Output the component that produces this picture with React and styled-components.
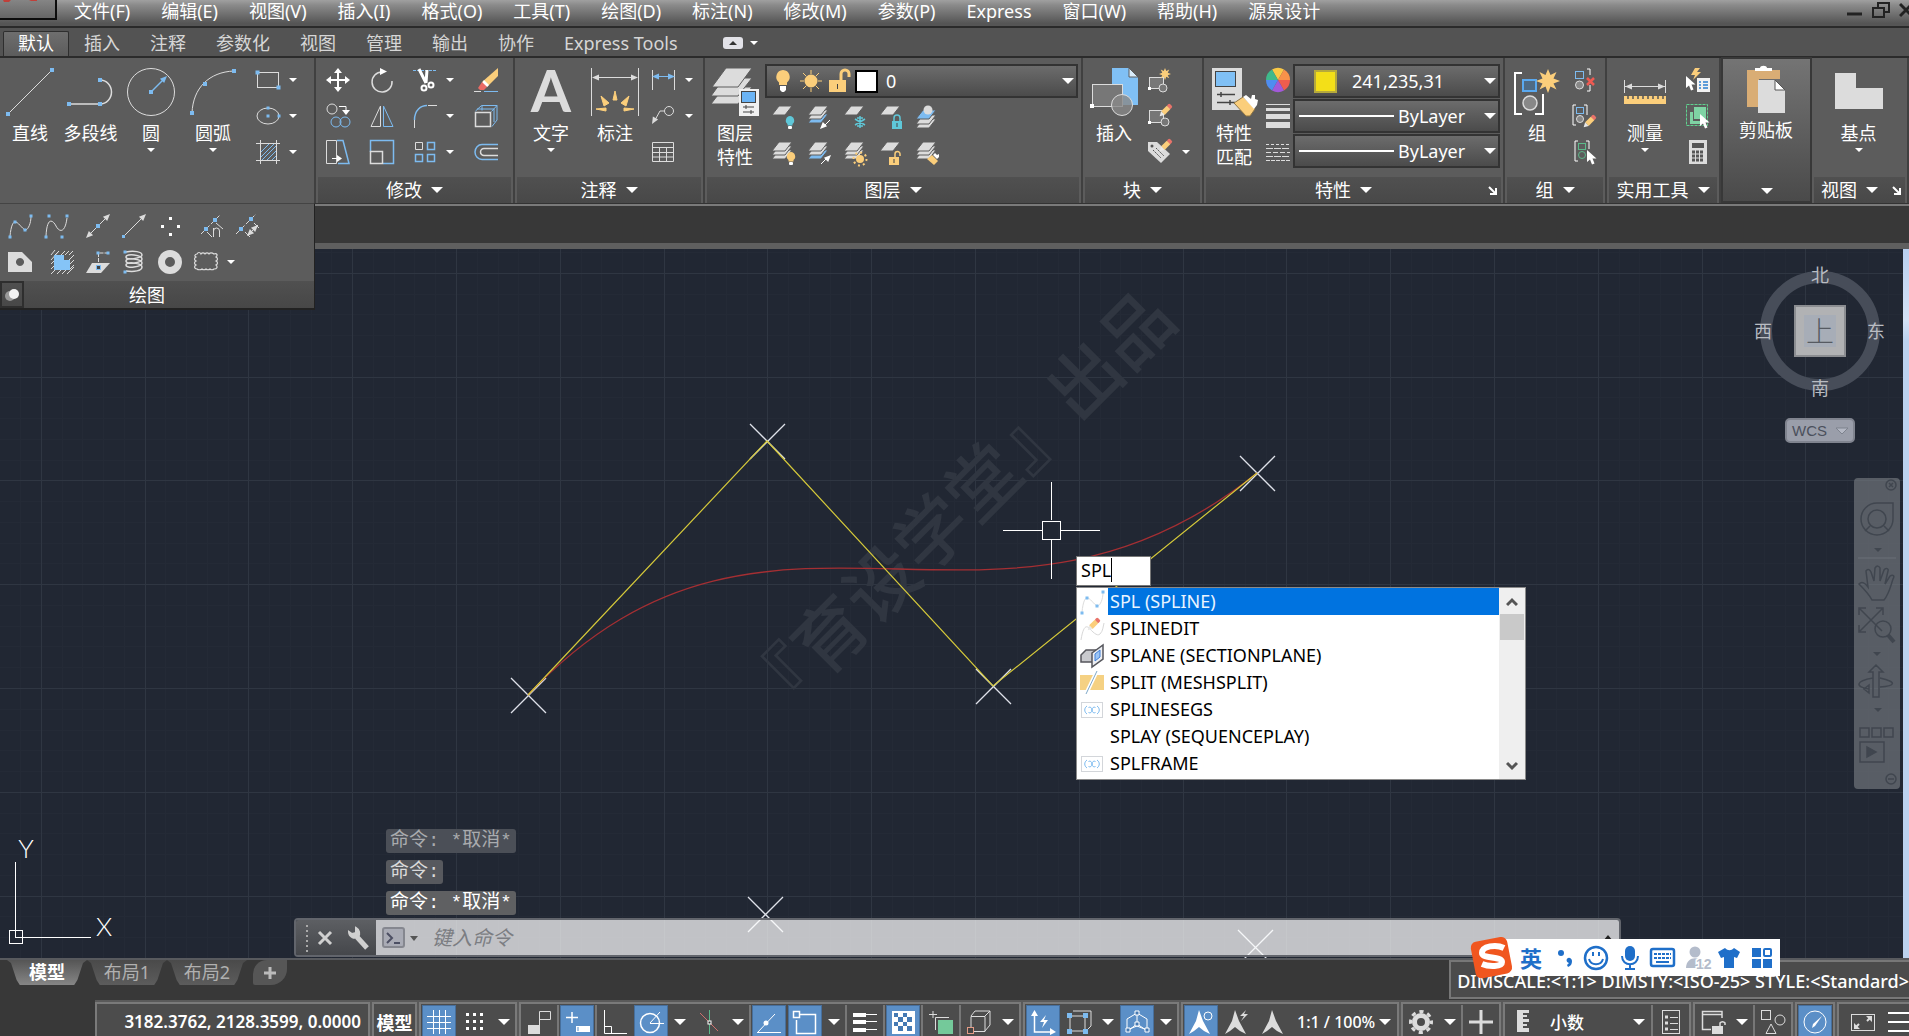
import { useState } from 'react'
import styled, { createGlobalStyle, css } from 'styled-components'

const W = '#dcdcdc'
const B = '#7dbbf0'
const Y = '#fbce7b'
const BG = '#5c5c5c'

/* ---------- icon pieces ---------- */

const Dot = ({ x, y, s = 4 }) => <rect x={x - s / 2} y={y - s / 2} width={s} height={s} fill={B} />
const Sheet = ({ y, fill = W }) => <path d={`M8 ${y}h13l-7 9H1z`} fill={fill} stroke={BG} strokeWidth='1' />
const Stack = ({ last = W }) => <><Sheet y={9} fill={last} /><Sheet y={5} /><Sheet y={1} /></>
const Bulb = ({ x, y, fill }) => <>
    <path d={`M${x} ${y}a4.5 4.5 0 0 1 2.5 8v1.500h-5v-1.500a4.500 4.500 0 0 1 2.500-8z`} fill={fill} />
    <rect x={x - 2} y={y + 10} width='4' height='3' rx='1' fill='#fff' />
</>
const Pencil = ({ x, y }) => <g transform={`translate(${x} ${y}) rotate(45)`}>
    <rect x='-2.500' y='0' width='5' height='4' rx='1.500' fill='#e8736a' />
    <rect x='-2.500' y='3.500' width='5' height='8' fill={Y} />
    <path d='M-2.500 11.500h5L0 16z' fill='#e9e9e9' />
</g>
const Cursor = ({ x, y }) => <path transform={`translate(${x} ${y})`} d='M0 0v12l3-2.500 2 5 2.500-1-2-5h4z' fill='#fff' />
const Arrowhead = ({ x, y, r = 0, fill = W }) => <path transform={`translate(${x} ${y}) rotate(${r})`} d='M0 0l-7-3v6z' fill={fill} />
const Star = ({ x, y, s = 1 }) => <path transform={`translate(${x} ${y}) scale(${s})`} fill={Y}
    d='M0-12l2.500 6 6-3-3 6.500L12 0 5.500 2.500l3 6-6-3L0 12l-2.500-6.500-6 3 3-6L-12 0l6.500-2.500-3-6.500 6 3z' />
const Lock = ({ x, y, fill, open }) => <>
    <rect x={x} y={y} width='10' height='8' fill={fill} />
    <path d={open ? `M${x + 6} ${y}v-3a2.500 2.500 0 0 1 5 0v2` : `M${x + 2} ${y}v-3a3 3 0 0 1 6 0v3`} fill='none' stroke={fill} strokeWidth='1.500' />
    <rect x={x + 4.5} y={y + 2} width='1' height='4' fill='#444' />
</>

const small = {
    rect: <><rect x='1.500' y='4.500' width='21' height='15' stroke={W} /><Dot x={1.5} y={4.5} /><Dot x={22.5} y={19.5} /></>,
    ellipse: <><ellipse cx='12' cy='12' rx='11' ry='8' stroke={W} /><Dot x={12} y={4} s={3} /><Dot x={12} y={12} s={3} /><Dot x={23} y={12} s={3} /></>,
    hatch: <><path d='M4.500 0v24M20.500 0v24M0 3.500h24M0 20.500h24' stroke={W} /><path d='M5 12l8-8M5 17L18 4M6 20L20 6M11 20l9-9M16 20l4-4' stroke={B} /></>,
    move: <path d='M12 0l4 5h-3v6h6V8l5 4-5 4v-3h-6v6h3l-4 5-4-5h3v-6H5v3l-5-4 5-4v3h6V5H8z' fill='#fff' />,
    rotate: <><path d='M12 4A10 10 0 1 0 22 13' stroke={W} strokeWidth='1.500' /><path d='M10 0l7 3.500-7 3.500z' fill='#fff' /></>,
    trim: <><path d='M0 2.500h24' stroke={B} strokeDasharray='3 1' /><path d='M6 1l7 14M14 2l-1 13' stroke='#fff' strokeWidth='3' /><circle cx='11' cy='20' r='2.500' stroke='#fff' strokeWidth='2' /><circle cx='18' cy='17' r='2.500' stroke='#fff' strokeWidth='2' /></>,
    erase: <><path d='M0 23.500h7' stroke={W} /><path d='M10 23.500h14' stroke={B} /><path d='M24 0v8L13 19l-5-5z' fill={Y} /><path d='M10 12l5 5-2 2-5-4z' fill='#fff' /><path d='M8 14l5 5-3 3H6l-2-2z' fill='#ea6a64' /></>,
    copy: <><circle cx='6' cy='5' r='5' stroke={W} /><circle cx='10' cy='18' r='5' stroke={B} /><circle cx='19' cy='18' r='5' stroke={B} /><path d='M13 2.500h7v4' stroke='#fff' /><path d='M16 6h8l-4 5z' fill='#fff' /></>,
    mirror: <><path d='M10.500 2v20.500H1z' stroke={W} /><path d='M13.500 2v20.500H23z' stroke={B} /></>,
    fillet: <><path d='M1.500 16C1.500 6 8 1.500 14 1.500' stroke={B} strokeWidth='1.500' /><path d='M15 1.500h9M1.500 16v8' stroke={W} /></>,
    explode: <><path d='M1.500 8.500h15v14h-15z' stroke={W} strokeWidth='1.500' /><path d='M1.500 7l6-5.500h15.500l-5.500 6M23 1.500V16l-5 6.500M8 1.500v5M3 5h17v13' stroke={B} /></>,
    stretch: <><path d='M.5.5h10v23H.500z' stroke={W} /><path d='M11 .500h6l6 23H12' stroke={B} strokeWidth='1.500' /><path d='M6 18.500h7' stroke='#fff' /><path d='M11 15l5 3.500-5 3.500z' fill='#fff' /></>,
    scale: <><path d='M.5 12V.500h23v23H13' stroke={B} strokeWidth='1.500' /><path d='M.5 11.500h12v12H.500z' stroke={W} strokeWidth='1.500' /></>,
    array: <><path d='M2.500 2.500h7v7h-7z' stroke={W} /><path d='M14.500 2.500h7v7h-7zM2.500 14.500h7v7h-7zM14.500 14.500h7v7h-7z' stroke={B} strokeWidth='1.500' /></>,
    offset: <><path d='M24 4.500H8a7 7.500 0 0 0 0 15h16' stroke={B} strokeWidth='1.500' /><path d='M24 8.500H10a3.500 3.500 0 0 0 0 7h14' stroke={W} strokeWidth='1.500' /></>,
    linear: <><path d='M1.500 2v20M23.500 2v20' stroke={W} /><path d='M3 8.500h19' stroke={B} /><Arrowhead x={1} y={8.5} r={180} fill={B} /><Arrowhead x={24} y={8.5} fill={B} /></>,
    leader: <><circle cx='18' cy='7' r='4.500' stroke={W} /><path d='M13 7H9L4 16' stroke={W} /><Arrowhead x={1} y={20} r={120} /></>,
    table: <path d='M1.500 2.500h21v19h-21zM1.500 7.500h21M1.500 12.500h21M1.500 17h21M8.500 8v13M15.500 8v13' stroke={W} />,
    layOff: <><Sheet y={1} /><Bulb x={19} y={11} fill='#5fc7d8' /></>,
    layIso: <><Stack last={B} /><path d='M23 15l-7 7' stroke='#fff' /><Arrowhead x={13} y={24} r={135} fill='#fff' /></>,
    layFreeze: <><Sheet y={1} /><path d='M17 11v12M12 14l10 6M22 14l-10 6M14 13h6M14 21h6' stroke='#5fc7d8' strokeWidth='1.500' /></>,
    layLock: <><Sheet y={1} /><Lock x={13} y={16} fill='#5fc7d8' /></>,
    layCur: <><Sheet y={14} /><Sheet y={10} /><Sheet y={5} fill={B} /><circle cx='13' cy='5' r='4.500' fill={W} /></>,
    layOn: <><Stack /><Bulb x={20} y={11} fill={Y} /></>,
    layUniso: <><Stack last={B} /><path d='M14 23l7-7' stroke='#fff' /><Arrowhead x={24} y={14} r={-45} fill='#fff' /></>,
    layThaw: <><Stack /><circle cx='17' cy='18' r='4' fill={Y} /><circle cx='17' cy='18' r='6.500' stroke={Y} strokeWidth='2' strokeDasharray='2 3' /></>,
    layUnlock: <><Sheet y={1} /><Lock x={10} y={16} fill={Y} open /></>,
    layMatch: <><Stack /><path d='M12 18l5-4 6 6-4 4z' fill={Y} /><path d='M18 14l2-2 2 2 2-1v3l-2 2z' fill='#fff' /></>,
    blkNew: <><rect x='1.500' y='9.500' width='14' height='11' fill='#777' stroke={W} /><circle cx='15' cy='20' r='4' fill='#777' stroke={W} /><rect y='19' width='3' height='3' fill='#fff' /><Star x={17} y={6} s={0.5} /></>,
    blkEdit: <><rect x='1.500' y='6.500' width='14' height='12' fill='#777' stroke={W} /><circle cx='17' cy='18' r='4' fill='#777' stroke={W} /><rect y='17' width='3' height='3' fill='#fff' /><Pencil x={23} y={1} /></>,
    blkAttr: <><path d='M0 2h9l13 12-9 9L0 11z' fill={W} /><circle cx='4' cy='6' r='1.500' fill='#555' /><path d='M5 10l8 8M8 8l8 8' stroke='#555' strokeDasharray='2 1' /><Pencil x={23} y={0} /></>,
    wheel: <>{['#f9c846', '#f7924a', '#ef5d4e', '#a259d9', '#4f8df0', '#3fb98b'].map((c, i) => <path key={c} d='M12 12V0A12 12 0 0 1 22.400 6z' fill={c} transform={`rotate(${i * 60 - 30} 12 12)`} />)}</>,
    weights: <path d='M0 0h24v1H0zM0 4h24v3H0zM0 10h24v5H0zM0 18h24v6H0z' fill={W} />,
    types: <><path d='M0 4.500h24' stroke={W} strokeDasharray='3 2' /><path d='M0 8.500h24M0 16.500h24' stroke={W} strokeDasharray='7 1' /><path d='M0 12.500h24' stroke={W} strokeDasharray='5 2' /><path d='M0 20.500h24' stroke={W} strokeDasharray='4 1' /></>,
    ungroup: <><rect x='3.500' y='3.500' width='8' height='7' stroke={B} /><circle cx='7.500' cy='17' r='4' fill='#888' stroke={W} /><path d='M15 1h3v6M18 17v6h-3' stroke='#fff' /><path d='M15 10l7 7M22 10l-7 7' stroke='#ee5a52' strokeWidth='2.500' /></>,
    groupEdit: <><path d='M4 1H1v20h3M12 1h3v10' stroke='#fff' /><rect x='4.500' y='3.500' width='7' height='6' stroke={B} /><circle cx='8' cy='15' r='3.500' fill='#888' stroke={W} /><Pencil x={23} y={12} /></>,
    groupSel: <><path d='M6 1H3v20h3M14 1h3v8' stroke='#fff' /><rect x='6.500' y='3.500' width='7' height='6' stroke='#5cb98a' /><circle cx='10' cy='15' r='3.500' stroke='#5cb98a' /><Cursor x={15} y={10} /></>,
    quick: <><path d='M9 0L5 7h4l-2 5 8-8h-4l3-4z' fill={Y} /><Cursor x={0} y={8} /><rect x='11' y='10' width='13' height='14' fill='#f1f1f1' /><path d='M13 14h2M17 14h5M13 17h2M17 17h5M13 20h2M17 20h5' stroke='#2b7fd0' strokeWidth='1.500' /></>,
    selAll: <><rect x='.500' y='.500' width='21' height='21' stroke='#5fd18e' strokeDasharray='3 1' /><path d='M4 8h3v9h9v3H4z' fill='#7fd3a4' /><rect x='8' y='3' width='12' height='12' fill='#7fd3a4' /><Cursor x={14} y={10} /></>,
    calc: <><rect x='3' y='0' width='18' height='24' fill={W} /><rect x='6' y='3' width='12' height='5' fill='#555' /><path d='M6 12h12M6 16h12M6 20h12' stroke='#555' strokeWidth='3' strokeDasharray='3 1' /></>,
    splFit: <><path d='M2 22C3 12 5 7 8 8s8 9 10 8 5-6 5-14' stroke={W} /><Dot x={2} y={23} s={3} /><Dot x={7} y={8} s={3} /><Dot x={17} y={16} s={3} /><Dot x={23} y={2} s={3} /></>,
    splCv: <><path d='M2 22C3 2 9 6 12 12s9 8 11-8' stroke={W} /><Dot x={2} y={23} s={3} /><Dot x={5} y={2} s={3} /><Dot x={18} y={23} s={3} /><Dot x={23} y={2} s={3} /></>,
    xline: <><path d='M3 21L21 3' stroke={W} /><Arrowhead x={0} y={24} r={135} /><Arrowhead x={24} y={0} r={-45} /><Dot x={12} y={12} /></>,
    ray: <><path d='M2 22L21 3' stroke={W} /><Arrowhead x={24} y={0} r={-45} /><Dot x={1.5} y={22.5} s={3} /></>,
    points: <path d='M11 3h3v3h-3zM3 11h3v3H3zM19 11h3v3h-3zM11 19h3v3h-3z' fill='#fff' />,
    divide: <><path d='M1 20L20 1' stroke={W} strokeDasharray='5 2' /><Dot x={6} y={15} /><Dot x={15} y={6} /><path d='M13.500 23v-9M13.500 17a3 3 0 0 1 6 0v6M16 9l7 6M7 18l5 5' stroke={W} /></>,
    measurePt: <><path d='M0 20L20 0' stroke={W} strokeDasharray='5 2' /><Dot x={5} y={15} /><Dot x={15} y={5} /><path d='M9 18l5 5M18 9l5 5M12 21l10-10' stroke={W} /><Arrowhead x={11} y={22} r={135} /><Arrowhead x={22} y={11} r={-45} /></>,
    region: <path fillRule='evenodd' d='M0 2h14l10 10v10H0zM12 8a4 4 0 1 0 .01 0z' fill={W} />,
    boundary: <><path d='M1 5l4-5M1 10L9 1M5 5l4-4M11 5l4-4M15 5l4-4M19 5l4-4M19 10l5-5M19 15l5-5M19 20l5-5M17 24l7-7M12 24l5-5M7 24l5-5M1 24l6-6M1 19l4-4M1 14l4-4' stroke={W} /><path d='M4 5h10v5h6v10H4z' fill='#85c4f7' /></>,
    wipe: <><path d='M6 13h18l-9 10H0z' fill={W} /><path d='M12.500 17V3h10' stroke={W} strokeDasharray='4 1' /><Dot x={12} y={3} s={3} /><Dot x={22} y={3} s={3} /><rect x='10.500' y='15.500' width='4' height='4' fill='#444' stroke={B} /></>,
    helix: <><path d='M4 2c8-2 16 0 16 3s-16 6-16 2 16-2 16 2-16 6-16 2 16-2 16 2-16 6-16 2 16-2 16 2-8 5-16 4' stroke={W} strokeWidth='1.500' /><Dot x={3} y={2} s={3} /><Dot x={3} y={22} s={3} /></>,
    donut: <circle cx='12' cy='12' r='8.500' stroke={W} strokeWidth='7' />,
    cloud: <path d='M3 4c1-2 3-2 4 0 1-1.500 3-1.500 4 0 1-1.500 3-1.500 4 0 1-1.500 3-1.500 5 0 3-1 4 1 2 3 2 1 2 3 0 4 2 1 2 3 0 4 2 2 1 4-2 4-1 1-3 1-4 0-1 1-3 1-4 0-1 1-3 1-4 0-1 1-4 1-5 0-3 0-3-3-1-4-2-1-2-3 0-4-2-1-2-3 0-4-2-1-1-3 1-3z' stroke={W} strokeWidth='1.200' />,
    bulb: <><path d='M12 1a7 7 0 0 1 4 12.500V16H8v-2.500A7 7 0 0 1 12 1z' fill={Y} /><path d='M9 17h6v4l-2 2h-2l-2-2z' fill='#fff' /></>,
    sun: <><circle cx='12' cy='12' r='6.500' fill={Y} /><path d='M12 1v4M12 19v4M1 12h4M19 12h4M4 4l3 3M17 17l3 3M20 4l-3 3M7 17l-3 3' stroke={Y} /></>,
    unlock: <><rect x='2' y='11' width='17' height='12' fill={Y} /><path d='M14 11V5a4 4 0 0 1 8 0v3' stroke={Y} strokeWidth='3' /><path d='M10.500 15v5' stroke='#444' /></>,
    splineEdit: <><path d='M1 23C3 10 6 8 9 11s8 9 11 6 3-7 4-11' stroke='#d8d8d8' /><Pencil x={19} y={2} /></>,
    section: <><path d='M1 11l5-5h11v8l-3 4H1z' fill='#c9cace' stroke='#55565c' strokeWidth='1.500' /><path d='M12 9L23 1v14l-11 8z' fill='#eceef2' stroke='#55565c' strokeWidth='1.500' /><path d='M15 10l5-4v7l-5 4z' fill='#9cc4f4' stroke='#3f7fd8' /></>,
    meshSplit: <><path d='M0 4h24v15H0z' fill='#f5d183' /><path d='M6 23L17 0' stroke='#fff' strokeWidth='4' /><path d='M6 23L17 0' stroke='#7fa9c9' /></>,
    variable: <><rect x='1.500' y='4.500' width='21' height='15' stroke='#d3d6da' /><path d='M7 8c-3 2-3 6 0 8M17 8c3 2 3 6 0 8M8.500 9.500c2-1 3 0 3.500 2.500s1.500 3.500 3.500 2.500M15.500 9.500c-2-1-3 0-3.500 2.500s-1.500 3.500-3.500 2.500' stroke='#7dbbf0' /></>,
    none: null,
    /* status bar */
    grid: <path d='M6.500 0v24M12.500 0v24M18.500 0v24M0 6.500h24M0 12.500h24M0 18.500h24' stroke='#fff' />,
    snap: <path d='M3 3h3v3H3zM10 3h3v3h-3zM17 3h3v3h-3zM3 10h3v3H3zM10 10h3v3h-3zM17 10h3v3h-3zM3 17h3v3H3zM10 17h3v3h-3zM17 17h3v3h-3z' fill='#fff' />,
    infer: <><path d='M12.500 15V1.500h11v8h-11' stroke={W} /><rect x='1' y='15' width='12' height='9' fill={W} /></>,
    dyn: <><path d='M7 2v11M1 7.500h12' stroke='#fff' strokeWidth='1.500' /><rect x='11' y='16' width='14' height='6' fill='#fff' /><path d='M13 17v4' stroke='#5b8fc7' /></>,
    ortho: <path d='M1.500 0v23.500H24M1.500 16.500h7v7' stroke='#fff' />,
    polar: <><circle cx='11' cy='13' r='9.500' stroke='#fff' strokeWidth='1.500' /><path d='M11 13.500h14M11 13L21 2' stroke='#fff' /></>,
    iso: <><path d='M12.500 0v24' stroke='#5cb98a' /><path d='M3 3l18 18' stroke='#d0706c' /><rect x='11' y='11' width='3' height='3' fill='#333' stroke='#fff' /></>,
    track: <><path d='M0 22.500h24M1 22L18 4' stroke='#fff' /><circle cx='9' cy='13' r='2.500' fill='#fff' /></>,
    osnap: <><path d='M6 4.500h16.500v19h-19V10' stroke='#fff' strokeWidth='1.500' /><rect x='.500' y='1.500' width='6' height='6' stroke='#fff' strokeWidth='1.500' /></>,
    lwt: <><path d='M0 5h13M0 12h13M0 20h13' stroke='#fff' strokeWidth='4' /><path d='M12 4.500h12M12 11.500h12M12 19.500h12' stroke='#fff' /></>,
    transp: <><rect x='1' y='1' width='23' height='23' fill='#fff' /><path fill='#4479b3' d='M3 3h4v4H3zM12 3h4v4h-4zM7 7h5v5H7zM16 7h5v5h-5zM3 12h4v4H3zM12 12h4v4h-4zM7 16h5v5H7zM16 16h5v5h-5z' /></>,
    cycle: <><path d='M4 1v7M0 4.500h8M6.500 20V7.500H20' stroke={W} /><rect x='9' y='10' width='15' height='14' fill='#74c99a' /></>,
    osnap3: <><path d='M4 6.500h14v15H4zM4 6l4-5h15v14l-5 6M18 6l5-5' stroke={W} /><rect x='.500' y='17.500' width='6' height='6' fill='#444' stroke='#e39a84' /></>,
    ducs: <><path d='M3.500 4v18H21' stroke='#fff' strokeWidth='1.500' /><path d='M0 6l3.500-6L7 6zM19 18l6 4-6 3z' fill='#fff' /><path d='M15 5l-6 7h4l-2 6 6-8h-4z' fill='#fff' /></>,
    filter: <><path d='M3 6h15v15H3zM6 1h18v15l-3 3' stroke={W} /><path fill={B} d='M0 3h5v5H0zM16 3h5v5h-5zM0 19h5v5H0zM16 19h5v5h-5z' /></>,
    gizmo: <><path d='M12 3l10 6v11l-10-4-10 4V9z' stroke='#fff' /><path d='M12 5v9L4 20M12 14l9 6' stroke='#fff' /><path d='M10 1h4v4h-4zM10 12h4v4h-4zM1 18h4v4H1zM20 18h4v4h-4z' fill='#4479b3' stroke='#fff' /></>,
    anno1: <><path d='M10 0l4 11 7 13-6-3-5-4-5 4-5 3 7-13z' fill='#fff' /><circle cx='19' cy='6' r='4' stroke='#fff' /></>,
    anno2: <><path d='M10 0l4 11 7 13-6-3-5-4-5 4-5 3 7-13z' fill={W} /><path d='M21 0l-6 6h4l-3 5 7-7h-4z' fill={W} /></>,
    anno3: <path d='M11 0l4 11 7 13-6-3-5-4-5 4-5 3 7-13z' fill={W} />,
    gear: <><circle cx='12' cy='12' r='6.500' stroke={W} strokeWidth='5' /><circle cx='12' cy='12' r='10.500' stroke={W} strokeWidth='3' strokeDasharray='4.200 4.050' strokeDashoffset='2' /></>,
    plus: <path d='M12 0v24M0 12h24' stroke={W} strokeWidth='3' />,
    ruler: <path d='M6 0h12v3h-6v2h4v2h-4v2h6v3h-6v2h4v2h-4v2h6v4H6z' fill={W} />,
    list: <><rect x='3.500' y='.500' width='17' height='23' stroke={W} /><path d='M6 7h3M6 13h3M6 19h3' stroke={W} strokeWidth='3' /><path d='M11 7.500h8M11 13.500h8M11 19.500h8' stroke={W} /></>,
    lockUi: <><path d='M21 8V1.500H1.500v18H10M1.500 4.500H21' stroke={W} strokeWidth='1.500' /><rect x='11' y='16' width='11' height='8' fill={W} /><path d='M19 16v-3a3 3 0 0 1 5 0v2' stroke={W} strokeWidth='1.500' /></>,
    isolate: <><rect x='.500' y='.500' width='9' height='9' stroke={W} /><circle cx='19' cy='10' r='5' stroke={W} /><path d='M10 14l5 9.500H5z' stroke={W} /></>,
    perf: <><circle cx='12' cy='12' r='11' stroke='#fff' /><path d='M19 6l-7 10-3 2 1-4z' fill='#fff' /></>,
    full: <><rect x='.500' y='4.500' width='23' height='16' stroke={W} /><path d='M21 6v6l-6-6zM3 19v-6l6 6z' fill={W} /><path d='M20 7l-4 4M4 18l4-4' stroke={W} strokeWidth='2' /></>,
    menu: <path d='M0 3h24M0 12h24M0 21h24' stroke='#fff' strokeWidth='2' />,
}

const big = {
    line: <><path d='M2 46L46 2' stroke={W} /><Dot x={2} y={46} /><Dot x={46} y={2} /></>,
    pline: <><path d='M2 36h31a11.500 12 0 0 0 0-24' stroke={W} strokeWidth='1.500' /><Dot x={2} y={36} /><Dot x={33} y={36} /><Dot x={33} y={12} /></>,
    circle: <><circle cx='24' cy='24' r='23.500' stroke={W} /><path d='M24 24L36 12' stroke={B} strokeWidth='1.500' /><Arrowhead x={40} y={8} r={-45} fill={B} /><Dot x={24} y={24} /></>,
    arc: <><path d='M3 45C4 20 20 4 45 3' stroke={W} /><Dot x={3} y={45} /><Dot x={16} y={16} /><Dot x={45} y={3} /></>,
    text: <text x='24' y='44' textAnchor='middle' fontFamily='Lato' fontSize='58' fontWeight='700' fill={W}>A</text>,
    dim: <><path d='M.5 0v48M47.500 0v48M2 9.500h44' stroke={W} /><Arrowhead x={1} y={9.5} r={180} /><Arrowhead x={47} y={9.5} />
        <path fill={Y} d='M22 32l2-9 2 9zM18 35l-8-7 3 10zM30 35l8-7-3 10zM15 40l-10 1 10 2zM33 40l10 1-10 2z' stroke={Y} /></>,
    layers: <><path d='M13 19h28L27 36H0z' fill={W} stroke={BG} /><path d='M13 10h28L27 28H0z' fill={W} stroke={BG} /><path d='M15 0h26L27 19H1z' fill={W} stroke={BG} />
        <rect x='28' y='21' width='20' height='27' fill='#f0f0f0' /><rect x='30.500' y='23.500' width='14' height='11' fill='#6bb4f5' stroke='#444' /><path d='M32 39h11M32 44h11' stroke='#444' /><path d='M35 37v4M40 42v4' stroke='#444' /></>,
    insert: <><path d='M22 0h17l9 9v28H22z' fill='#80c0f5' /><path d='M39 0v9h9z' fill='#d8ecfb' stroke={BG} /><rect x='2.500' y='16.500' width='30' height='22' fill='#777' stroke={W} /><circle cx='32' cy='37' r='10.500' fill='#888' fillOpacity='.8' stroke={W} /><rect x='0' y='36' width='4' height='4' fill='#fff' /></>,
    match: <><rect x='2' y='0' width='30' height='42' fill={W} /><rect x='5.500' y='3.500' width='20' height='15' fill='#80c0f5' stroke='#444' /><path d='M7 26.500h18M7 34.500h18M11 24v5M20 32v5' stroke='#444' strokeWidth='1.500' />
        <path d='M24 35l9-6 12 12-5 7h-4z' fill={Y} stroke='#8d7443' /><path d='M33 29l3-2 5 4 1-4h3v4l3 1-1 5-3 4z' fill='#fff' /></>,
    group: <><path d='M9 5H2v41h7M22 46h8V26' stroke='#fff' strokeWidth='2' /><rect x='10' y='12' width='13' height='11' fill='#4f6b85' stroke='#5aa9f0' strokeWidth='2' /><circle cx='17' cy='35' r='7' fill='#888' stroke={W} strokeWidth='1.500' /><Star x={35} y={13} /></>,
    measure: <><path d='M3.500 12v13M44.500 12v13M4 18.500h40' stroke={W} /><Arrowhead x={4} y={18.5} r={180} /><Arrowhead x={44} y={18.5} /><rect x='3' y='28' width='42' height='8' fill={Y} /><path d='M7 27v4M12 27v4M17 27v4M22 27v4M27 27v4M32 27v4M37 27v4M42 27v4' stroke='#555' strokeWidth='1.500' /></>,
    paste: <><path d='M5 5h33v9H17v28H5z' fill='#d9ad75' /><path d='M13 6V3h5c0-3 7-3 7 0h5v3z' fill='#fff' /><path d='M16 15h17l10 10v23H16z' fill={W} /><path d='M33 15v10h10z' fill='#fff' stroke='#555' /></>,
    base: <path d='M0 5h21v15h27v21H0z' fill={W} />,
}

const Icon = ({ name, size = 24 }) => (
    <Svg $size={size} viewBox={`0 0 ${size} ${size}`} fill='none' aria-hidden='true'>
        {size === 48 ? big[name] : small[name]}
    </Svg>
)

/* ---------- small controls ---------- */

const Tool = ({ name, label }) => <IconButton aria-label={label || name}><Icon name={name} /></IconButton>
const SplitTool = ({ name, label, gap }) => (
    <Split $gap={gap}>
        <Tool name={name} label={label} />
        <ArrowButton aria-label={`${label || name} 选项`}><Caret /></ArrowButton>
    </Split>
)
const BigTool = ({ name, lines, width, drop }) => (
    <BigButton $width={width}>
        <Icon name={name} size={48} />
        <BigLabel>{lines.map(l => <span key={l}>{l}</span>)}</BigLabel>
        {drop && <Caret />}
    </BigButton>
)
const Title = ({ children, launcher }) => (
    <PanelTitle $launcher={launcher}>
        {children}<Caret $big />
        {launcher && <Launcher aria-label='对话框'>
            <svg width='9' height='9' viewBox='0 0 9 9' fill='none'><path d='M1 1l6 6M8 2v6H2' stroke='#fff' strokeWidth='2' /></svg>
        </Launcher>}
    </PanelTitle>
)

const MENUS = ['文件(F)', '编辑(E)', '视图(V)', '插入(I)', '格式(O)', '工具(T)', '绘图(D)', '标注(N)', '修改(M)', '参数(P)', 'Express', '窗口(W)', '帮助(H)', '源泉设计']
const TABS = ['默认', '插入', '注释', '参数化', '视图', '管理', '输出', '协作', 'Express Tools']
const SUGGESTIONS = [
    ['splFit', 'SPL (SPLINE)'],
    ['splineEdit', 'SPLINEDIT'],
    ['section', 'SPLANE (SECTIONPLANE)'],
    ['meshSplit', 'SPLIT (MESHSPLIT)'],
    ['variable', 'SPLINESEGS'],
    ['none', 'SPLAY (SEQUENCEPLAY)'],
    ['variable', 'SPLFRAME'],
]

const Ribbon = () => (
    <RibbonArea>
        <Panels>
            <Panel>
                <PanelBody>
                    <BigTool name='line' lines={['直线']} width={60} />
                    <BigTool name='pline' lines={['多段线']} width={61} />
                    <BigTool name='circle' lines={['圆']} width={60} drop />
                    <BigTool name='arc' lines={['圆弧']} width={64} drop />
                    <Column $left={11}>
                        <SplitTool name='rect' label='矩形' gap={9} />
                        <SplitTool name='ellipse' label='椭圆' gap={9} />
                        <SplitTool name='hatch' label='图案填充' gap={9} />
                    </Column>
                </PanelBody>
            </Panel>
            <Panel>
                <PanelBody>
                    <Column $left={10}><Tool name='move' label='移动' /><Tool name='copy' label='复制' /><Tool name='stretch' label='拉伸' /></Column>
                    <Column $left={20}><Tool name='rotate' label='旋转' /><Tool name='mirror' label='镜像' /><Tool name='scale' label='缩放' /></Column>
                    <Column $left={19}>
                        <SplitTool name='trim' label='修剪' gap={9} />
                        <SplitTool name='fillet' label='圆角' gap={9} />
                        <SplitTool name='array' label='阵列' gap={9} />
                    </Column>
                    <Column $left={20}><Tool name='erase' label='删除' /><Tool name='explode' label='分解' /><Tool name='offset' label='偏移' /></Column>
                </PanelBody>
                <Title>修改</Title>
            </Panel>
            <Panel>
                <PanelBody>
                    <BigTool name='text' lines={['文字']} width={72} drop />
                    <BigTool name='dim' lines={['标注']} width={56} />
                    <Column $left={8}>
                        <SplitTool name='linear' label='线性' gap={10} />
                        <SplitTool name='leader' label='引线' gap={10} />
                        <Tool name='table' label='表格' />
                    </Column>
                </PanelBody>
                <Title>注释</Title>
            </Panel>
            <Panel>
                <PanelBody>
                    <BigTool name='layers' lines={['图层', '特性']} width={60} />
                    <LayerSide>
                        <Combo>
                            <ComboIcons><Icon name='bulb' /><Icon name='sun' /><Icon name='unlock' /><Swatch $color='#fff' $edge='#000' /></ComboIcons>
                            <Select $left={8} aria-label='图层' defaultValue='0'><option>0</option></Select>
                            <Caret $big />
                        </Combo>
                        <IconGrid>
                            {['layOff', 'layIso', 'layFreeze', 'layLock', 'layCur', 'layOn', 'layUniso', 'layThaw', 'layUnlock', 'layMatch'].map(n => <Tool key={n} name={n} />)}
                        </IconGrid>
                    </LayerSide>
                </PanelBody>
                <Title>图层</Title>
            </Panel>
            <Panel>
                <PanelBody>
                    <BigTool name='insert' lines={['插入']} width={62} />
                    <Column $left={3}>
                        <Tool name='blkNew' label='创建' />
                        <Tool name='blkEdit' label='编辑' />
                        <SplitTool name='blkAttr' label='编辑属性' gap={10} />
                    </Column>
                </PanelBody>
                <Title>块</Title>
            </Panel>
            <Panel>
                <PanelBody>
                    <BigTool name='match' lines={['特性', '匹配']} width={60} />
                    <Column $left={2}><Tool name='wheel' label='颜色' /><Tool name='weights' label='线宽' /><Tool name='types' label='线型' /></Column>
                    <PropertySide>
                        <Combo>
                            <ComboIcons $pad={15}><Swatch $color='#f3df18' $edge='#b5a93c' /></ComboIcons>
                            <Select $left={15} aria-label='颜色' defaultValue='241,235,31'><option>241,235,31</option></Select>
                            <Caret $big />
                        </Combo>
                        <Combo>
                            <LineSample />
                            <Select $left={4} aria-label='线宽' defaultValue='ByLayer'><option>ByLayer</option></Select>
                            <Caret $big />
                        </Combo>
                        <Combo>
                            <LineSample />
                            <Select $left={4} aria-label='线型' defaultValue='ByLayer'><option>ByLayer</option></Select>
                            <Caret $big />
                        </Combo>
                    </PropertySide>
                </PanelBody>
                <Title launcher>特性</Title>
            </Panel>
            <Panel>
                <PanelBody>
                    <BigTool name='group' lines={['组']} width={64} />
                    <Column $left={3}><Tool name='ungroup' label='解除编组' /><Tool name='groupEdit' label='组编辑' /><Tool name='groupSel' label='组选择' /></Column>
                </PanelBody>
                <Title>组</Title>
            </Panel>
            <Panel>
                <PanelBody>
                    <BigTool name='measure' lines={['测量']} width={76} drop />
                    <Column $left={3}><Tool name='quick' label='快速选择' /><Tool name='selAll' label='全部选择' /><Tool name='calc' label='计算器' /></Column>
                </PanelBody>
                <Title>实用工具</Title>
            </Panel>
            <Panel $active>
                <PanelBody>
                    <BigTool name='paste' lines={['剪贴板']} width={86} />
                </PanelBody>
                <PanelTitle $plain><Caret $big /></PanelTitle>
            </Panel>
            <Panel>
                <PanelBody>
                    <BigTool name='base' lines={['基点']} width={93} drop />
                </PanelBody>
                <Title launcher>视图</Title>
            </Panel>
        </Panels>
        <Flyout>
            <FlyoutRow>
                <FlyoutGroup><Tool name='splFit' label='样条曲线拟合' /><Tool name='splCv' label='样条曲线控制点' /></FlyoutGroup>
                <FlyoutGroup><Tool name='xline' label='构造线' /><Tool name='ray' label='射线' /><Tool name='points' label='多点' /></FlyoutGroup>
                <FlyoutGroup><Tool name='divide' label='定数等分' /><Tool name='measurePt' label='定距等分' /></FlyoutGroup>
            </FlyoutRow>
            <FlyoutRow>
                <FlyoutGroup><Tool name='region' label='面域' /></FlyoutGroup>
                <FlyoutGroup>
                    <Tool name='boundary' label='边界' /><Tool name='wipe' label='区域覆盖' /><Tool name='helix' label='螺旋' />
                    <Tool name='donut' label='圆环' /><SplitTool name='cloud' label='修订云线' gap={9} />
                </FlyoutGroup>
            </FlyoutRow>
            <FlyoutTitle>
                <PinButton aria-label='固定'>
                    <svg width='16' height='16' viewBox='0 0 16 16'><circle cx='6' cy='9' r='5' fill='#999' /><circle cx='10' cy='7' r='5' fill='#f2f2f2' /></svg>
                </PinButton>
                <FlyoutName>绘图</FlyoutName>
            </FlyoutTitle>
        </Flyout>
    </RibbonArea>
)

const STEP = 103.8
const POINTS = [[528, 446], [767, 192], [993, 437], [1257, 224]]
const MARKS = [...POINTS, [765, 665], [1255, 698]]

const gridLines = (origin, count) => Array.from({ length: count }, (_, i) => ({
    at: Math.round(origin + (i - 5) * STEP / 5),
    major: i % 5 === 0,
}))

const Drawing = () => (
    <DrawingSvg aria-label='绘图区'>
        {[false, true].map(major => (
            <g key={String(major)} stroke={major ? '#2f3642' : '#242a36'} shapeRendering='crispEdges'>
                {gridLines(40.8, 110).filter(l => l.major === major).map(l => <line key={l.at} x1={l.at + 0.5} x2={l.at + 0.5} y1='0' y2='100%' />)}
                {gridLines(23.8, 60).filter(l => l.major === major).map(l => <line key={l.at} y1={l.at + 0.5} y2={l.at + 0.5} x1='0' x2='100%' />)}
            </g>
        ))}
        <text transform='translate(954 255) rotate(-45)' textAnchor='middle' dominantBaseline='central' fontFamily='Noto Sans CJK SC' fontWeight='500' fontSize='72' fill='#303641'>『育设学堂』出品</text>
        <g stroke='#dfe2ea' strokeWidth='1.300'>
            {MARKS.map(([x, y]) => <path key={x} d={`M${x - 17} ${y - 17}l35 35M${x + 18} ${y - 17}l-35 35`} />)}
        </g>
        <path d={`M${POINTS[0]}C${POINTS[1]} ${POINTS[2]} ${POINTS[3]}`} stroke='#a52f33' strokeWidth='1.300' fill='none' />
        <path d={`M${POINTS.join('L')}`} stroke='#d5c93a' strokeWidth='1.200' fill='none' />
        <g stroke='#fff' fill='none' shapeRendering='crispEdges'>
            <path d='M1051.500 233v38M1051.500 291v39M1003 281.500h39M1061 281.500h39' />
            <rect x='1042.500' y='272.500' width='18' height='18' />
            <path d='M15.500 613v75.500H91' />
            <rect x='9.500' y='681.500' width='13' height='13' />
        </g>
        <g fill='#fff' fontFamily='Lato' fontWeight='300' fontSize='26' textAnchor='middle'>
            <text x='26' y='609'>Y</text>
            <text x='104' y='687'>X</text>
        </g>
    </DrawingSvg>
)

const NavBar = () => (
    <Nav>
        <svg width='46' height='311' viewBox='0 0 46 311' fill='none' stroke='#40464f' strokeWidth='1.500'>
            <circle cx='37' cy='7' r='5' /><path d='M35 5l4 4M39 5l-4 4' />
            <path d='M39 25v16a16 16 0 1 1-16-16z' /><circle cx='23' cy='41' r='9' /><path d='M16 48l-5 5M30 48l5 5' />
            <path d='M20 70h8l-4 4z' fill='#40464f' stroke='none' />
            <path d='M4 80h38' stroke='#6a7078' strokeWidth='1' />
            <path d='M18 122c-3-6-7-10-13-16 3-3 6-1 9 3l-2-16c2-3 4-1 5 1l3 9 1-13c2-3 4-2 5 0v13l4-11c2-3 5-1 4 1l-3 13 5-8c3-2 5 0 3 3-3 9-4 15-9 21z' />
            <path d='M6 131l22 22M28 131L6 153M5 137v-7h7M22 130h7v7M5 147v7h7' /><circle cx='29' cy='151' r='8' /><path d='M34 157l6 7' strokeWidth='4' />
            <path d='M19 174h8l-4 4z' fill='#40464f' stroke='none' />
            <path d='M19 219v-25h-4l7-7 7 7h-4v25zM19 200c-18 3-18 9-4 11M26 200c18 4 15 8 0 9M15 207v8l-5-4z' />
            <path d='M20 230h8l-4 4z' fill='#40464f' stroke='none' />
            <path d='M6 250h9v9H6zM18 250h9v9h-9zM30 250h9v9h-9zM6 264h24v20H6z' /><path d='M13 269v10l9-5z' fill='#40464f' />
            <circle cx='37' cy='301' r='5' /><path d='M34 301h6' />
        </svg>
    </Nav>
)

const Ime = () => (
    <ImeBar>
        <svg width='46' height='46' viewBox='0 0 46 46'>
            <rect x='4' y='4' width='37' height='37' rx='6' fill='#f0561f' transform='rotate(-11 23 23)' />
            <path d='M35 13c-8-4-22-2-22 5 0 6 20 3 20 9 0 5-13 5-20 2' fill='none' stroke='#fff' strokeWidth='6' />
        </svg>
        <ImeLang>英</ImeLang>
        <svg width='226' height='26' viewBox='0 0 226 26' fill='none' stroke='#1f6fc9' strokeWidth='2'>
            <circle cx='7' cy='8' r='3' fill='#1f6fc9' stroke='none' /><path d='M14 13a3 3 0 0 1 4 3c0 3-1 5-4 6l-1-2 2-2c-3-1-3-4-1-5z' fill='#1f6fc9' stroke='none' />
            <circle cx='42' cy='13' r='11' strokeWidth='2.500' /><path d='M35 14c2 7 12 7 14 0M39 7v4M45 7v4' />
            <rect x='71' y='1' width='10' height='15' rx='5' fill='#1f6fc9' stroke='none' /><path d='M68 11c0 11 16 11 16 0M76 20v4M71 24h10' />
            <rect x='97' y='4' width='23' height='17' rx='2' strokeWidth='2.500' /><path d='M100 9h17M100 13h17' strokeDasharray='3 1' /><path d='M102 17h13' />
            <g fill='#b4bccb' stroke='none'><circle cx='141' cy='7' r='5.500' /><path d='M132 23c0-13 18-13 18 0z' /></g>
            <text x='142' y='24' fontFamily='Liberation Sans' fontWeight='700' fontSize='14' fill='#b4bccb' stroke='#fff' strokeWidth='3' paintOrder='stroke'>12</text>
            <path d='M171 3c3 3 6 3 9 0l6 4-3 6-3-1v11h-10V12l-3 1-3-6z' fill='#1f6fc9' stroke='none' />
            <path d='M198 3h9v9h-9zM198 14h9v9h-9zM209 14h9v9h-9z' fill='#1f6fc9' stroke='none' /><rect x='210' y='4' width='7' height='7' rx='1' />
        </svg>
    </ImeBar>
)

const Cell = ({ name, on, width = 34 }) => <StatusButton $on={on} $width={width} aria-label={name} aria-pressed={!!on}><Icon name={name} /></StatusButton>
const Drop = ({ name }) => <StatusButton $width={20} aria-label={name}><Caret $big /></StatusButton>

const StatusBar = () => (
    <Status>
        <Coords>3182.3762, 2128.3599, 0.0000</Coords>
        <StatusGroup>
            <ModelButton>模型</ModelButton>
        </StatusGroup>
        <StatusGroup><Cell name='grid' on /><Cell name='snap' /><Drop name='捕捉' /></StatusGroup>
        <StatusGroup>
            <Cell name='infer' /><Divider /><Cell name='dyn' on /><Divider /><Cell name='ortho' /><Cell name='polar' on />
            <Drop name='极轴' /><Cell name='iso' /><Drop name='等轴测' /><Divider /><Cell name='track' on /><Cell name='osnap' on /><Drop name='对象捕捉' />
            <Divider /><Cell name='lwt' /><Divider /><Cell name='transp' on /><Divider /><Cell name='cycle' /><Divider /><Cell name='osnap3' /><Drop name='三维捕捉' />
        </StatusGroup>
        <StatusGroup><Cell name='ducs' on /><Cell name='filter' /><Drop name='过滤' /><Cell name='gizmo' on /><Drop name='小控件' /></StatusGroup>
        <StatusGroup>
            <Cell name='anno1' on /><Cell name='anno2' /><Cell name='anno3' />
            <StatusField $width={104}><StatusSelect $small aria-label='注释比例' defaultValue='1:1 / 100%'><option>1:1 / 100%</option></StatusSelect><Caret $big /></StatusField>
        </StatusGroup>
        <StatusGroup><Cell name='gear' /><Drop name='工作空间' /><Divider /><Cell name='plus' /></StatusGroup>
        <StatusGroup>
            <StatusField $width={144}><Icon name='ruler' /><StatusSelect $left={15} aria-label='单位' defaultValue='小数'><option>小数</option></StatusSelect><Caret $big /></StatusField>
            <Divider /><Cell name='list' />
        </StatusGroup>
        <StatusGroup><Cell name='lockUi' /><Drop name='锁定' /><Divider /><Cell name='isolate' /></StatusGroup>
        <StatusGroup><Cell name='perf' on /></StatusGroup>
        <StatusGroup><Cell name='full' width={46} /><Cell name='menu' width={24} /></StatusGroup>
    </Status>
)

const App = () => {
    const [tab, setTab] = useState('默认')
    const [command, setCommand] = useState('')
    const [input, setInput] = useState('SPL')

    return (
        <Window>
            <GlobalStyle />
            <MenuBar>
                <AppButton aria-label='应用程序'>
                    <svg width='54' height='18' viewBox='0 0 54 18'><path d='M3 0h8l-2 2H4zM29 0h8v1h-6z' fill='#c0403a' /></svg>
                </AppButton>
                <Menus>
                    {MENUS.map(m => <MenuItem key={m}>{m}</MenuItem>)}
                </Menus>
                <WindowButtons>
                    <WinButton aria-label='最小化'><svg width='16' height='18' viewBox='0 0 16 18'><path d='M0 14h15' stroke='#222' strokeWidth='3' /></svg></WinButton>
                    <WinButton aria-label='还原'><svg width='20' height='18' viewBox='0 0 20 18' fill='none' stroke='#222' strokeWidth='2'><path d='M2 8h11v9H2zM7 7V3h11v9h-4' /></svg></WinButton>
                    <WinButton aria-label='关闭'><svg width='10' height='18' viewBox='0 0 10 18'><path d='M1 4l12 12M13 4L1 16' stroke='#222' strokeWidth='3' /></svg></WinButton>
                </WindowButtons>
            </MenuBar>
            <TabBar>
                {TABS.map(t => <Tab key={t} $active={t === tab} onClick={() => setTab(t)}>{t}</Tab>)}
                <MinimizeButton aria-label='最小化功能区'>
                    <svg width='20' height='12' viewBox='0 0 20 12'><rect width='20' height='12' rx='3' fill='#e2e2e8' /><path d='M6 8h8l-4-4z' fill='#333' /></svg>
                    <Caret />
                </MinimizeButton>
            </TabBar>
            <Ribbon />
            <FileStrip />
            <Workspace>
                <Canvas>
                    <Drawing />
                    <ViewCube>
                        <svg width='122' height='122' viewBox='0 0 122 122' fill='none'><circle cx='61' cy='61' r='54' stroke='#474d59' strokeWidth='12' /></svg>
                        <CubeFace>上</CubeFace>
                        <Compass $x={61} $y={5}>北</Compass>
                        <Compass $x={61} $y={118}>南</Compass>
                        <Compass $x={4} $y={61}>西</Compass>
                        <Compass $x={117} $y={61}>东</Compass>
                    </ViewCube>
                    <Wcs>WCS<svg width='14' height='8' viewBox='0 0 14 8'><path d='M1 1h12L7 7z' fill='#b4b8c4' stroke='#7d828d' /></svg></Wcs>
                    <NavBar />
                    <DynamicInput aria-label='动态输入' value={input} onChange={e => setInput(e.target.value)} />
                    <TextCursor />
                    <Suggest>
                        <SuggestList>
                            {SUGGESTIONS.map(([icon, name], i) => (
                                <SuggestItem key={name}>
                                    <Icon name={icon} />
                                    <SuggestText $selected={i === 0}>{name}</SuggestText>
                                </SuggestItem>
                            ))}
                        </SuggestList>
                        <ScrollBar>
                            <svg width='12' height='26' viewBox='0 0 12 26' fill='none'><path d='M1 17l5-5 5 5' stroke='#555' strokeWidth='3' /></svg>
                            <Thumb />
                            <svg width='12' height='26' viewBox='0 0 12 26' fill='none'><path d='M1 10l5 5 5-5' stroke='#555' strokeWidth='3' /></svg>
                        </ScrollBar>
                    </Suggest>
                    <History>
                        <HistoryLine $dim={2}>命令: *取消*</HistoryLine>
                        <HistoryLine $dim={1}>命令:</HistoryLine>
                        <HistoryLine>命令: *取消*</HistoryLine>
                    </History>
                    <CommandBar>
                        <CommandHandle>
                            <svg width='80' height='36' viewBox='0 0 80 36' fill='none'>
                                <path d='M11 5v28' stroke='#aaa' strokeWidth='2' strokeDasharray='2 3' />
                                <path d='M23 12l12 12M35 12L23 24' stroke='#d0d0d0' strokeWidth='3' />
                                <path d='M61 17l10 11' stroke='#d0d0d0' strokeWidth='5' /><path d='M53 12a6 6 0 0 0 9 5 6 6 0 0 0-2-9v5l-4 1z' stroke='#d0d0d0' strokeWidth='2' fill='#d0d0d0' />
                            </svg>
                        </CommandHandle>
                        <CommandField>
                            <svg width='36' height='24' viewBox='0 0 36 24' fill='none'>
                                <rect x='1' y='2' width='21' height='19' rx='2' fill='#a9abb5' stroke='#85878f' strokeWidth='2' />
                                <path d='M5 7l5 5-5 5M12 17h6' stroke='#4c4f63' strokeWidth='2' /><path d='M28 10h8l-4 5z' fill='#555' />
                            </svg>
                            <CommandInput aria-label='命令行' placeholder='键入命令' value={command} onChange={e => setCommand(e.target.value)} />
                            <svg width='10' height='6' viewBox='0 0 10 6'><path d='M0 6h10L5 0z' fill='#222' /></svg>
                        </CommandField>
                    </CommandBar>
                </Canvas>
                <EdgeStrip />
            </Workspace>
            <LayoutBar>
                <LayoutTab $active>模型</LayoutTab>
                <LayoutTab>布局1</LayoutTab>
                <LayoutTab>布局2</LayoutTab>
                <AddTab aria-label='新建布局'><svg width='12' height='12' viewBox='0 0 12 12'><path d='M6 0v12M0 6h12' stroke='#bbb' strokeWidth='3' /></svg></AddTab>
                <DimInfo>DIMSCALE:&lt;1:1&gt; DIMSTY:&lt;ISO-25&gt; STYLE:&lt;Standard&gt;</DimInfo>
                <Ime />
            </LayoutBar>
            <StatusBar />
        </Window>
    )
}

export default App

const GlobalStyle = createGlobalStyle`
    * {
        box-sizing: border-box;
    }
    body {
        margin: 0;
        background: #383838;
        font-family: "Noto Sans", "Noto Sans CJK SC", sans-serif;
        font-size: 18px;
        color: #fff;
        overflow: hidden;
    }
    button, input, select {
        font: inherit;
        color: inherit;
        border: none;
        background: none;
        padding: 0;
        margin: 0;
    }
    svg {
        display: block;
        flex: none;
    }
`
const Svg = styled.svg`
    width: ${p => p.$size}px;
    height: ${p => p.$size}px;
    overflow: visible;
`
const Window = styled.div`
    height: 100vh;
    display: flex;
    flex-direction: column;
`
const MenuBar = styled.header`
    display: flex;
    height: 28px;
    background: linear-gradient(#a0a0a0, #8a8a8a 20%, #555 90%);
    border-bottom: 2px solid #2a2a2a;
    overflow: hidden;
`
const AppButton = styled.button`
    width: 57px;
    height: 20px;
    background: linear-gradient(#858585, #666);
    border-right: 2px solid #0c0c0c;
    border-bottom: 2px solid #0c0c0c;
`
const Menus = styled.nav`
    display: flex;
    flex: 1;
    gap: 31px;
    padding-left: 17px;
`
const MenuItem = styled.button`
    height: 22px;
    line-height: 22px;
    white-space: nowrap;
`
const WindowButtons = styled.div`
    display: flex;
    gap: 8px;
`
const WinButton = styled.button`
    display: flex;
    height: 20px;
`
const TabBar = styled.div`
    display: flex;
    height: 30px;
    padding: 3px 0 0 3px;
    background: #535353;
    border-bottom: 2px solid #2b2b2b;
`
const Tab = styled.button`
    padding: 0 14px 2px;
    line-height: 22px;
    white-space: nowrap;
    color: #d6d6d6;
    border: 1px solid transparent;
    border-bottom: none;
    ${p => p.$active && css`
        color: #fff;
        background: linear-gradient(#6e6e6e, #5c5c5c);
        border-color: #2e2e2e;
        border-radius: 2px 2px 0 0;
    `}
`
const Caret = styled.i`
    display: block;
    flex: none;
    width: 0;
    height: 0;
    border: ${p => p.$big ? 6 : 4}px solid transparent;
    border-top-color: #fff;
    border-bottom: none;
`
const MinimizeButton = styled.button`
    display: flex;
    align-items: center;
    gap: 7px;
    margin-left: 30px;
    padding-bottom: 2px;
`
const RibbonArea = styled.section`
    position: relative;
    z-index: 2;
`
const Panels = styled.div`
    display: grid;
    grid-template-columns: 316fr 199fr 190fr 378fr 121fr 301fr 102fr 114fr 91fr 97fr;
    height: 146px;
    background: #5c5c5c;
    border-bottom: 1px solid #333;
`
const Panel = styled.div`
    display: flex;
    flex-direction: column;
    justify-content: space-between;
    min-width: 0;
    border-right: 2px solid #404040;
    ${p => p.$active && css`
        background: linear-gradient(#747474, #4a4a4a);
        border: 2px solid #383838;
        margin-top: -1px;
    `}
`
const PanelBody = styled.div`
    display: flex;
    align-items: flex-start;
    padding-top: 10px;
    ${Panel}:nth-child(9) & {
        padding-top: 6px;
    }
`
const PanelTitle = styled.div`
    position: relative;
    display: flex;
    align-items: center;
    justify-content: center;
    gap: 9px;
    height: 26px;
    margin: 0 2px;
    padding-right: ${p => p.$launcher ? 20 : 0}px;
    padding-top: ${p => p.$plain ? 6 : 0}px;
    line-height: 24px;
    white-space: nowrap;
    background: ${p => p.$plain ? 'none' : 'linear-gradient(#505050, #484848)'};
`
const Launcher = styled.button`
    position: absolute;
    right: 4px;
    top: 9px;
`
const BigButton = styled.button`
    display: flex;
    flex-direction: column;
    align-items: center;
    flex: none;
    width: ${p => p.$width}px;
`
const BigLabel = styled.span`
    display: flex;
    flex-direction: column;
    margin: 5px 0 3px;
    line-height: 24px;
    white-space: nowrap;
`
const Column = styled.div`
    display: flex;
    flex-direction: column;
    flex: none;
    gap: 12px;
    margin-left: ${p => p.$left || 0}px;
`
const IconButton = styled.button`
    display: block;
    width: 24px;
    height: 24px;
`
const Split = styled.div`
    display: flex;
    align-items: center;
    gap: ${p => p.$gap}px;
`
const ArrowButton = styled.button`
    display: flex;
    height: 20px;
    align-items: center;
`
const LayerSide = styled.div`
    flex: 1;
    min-width: 0;
    margin: -4px 3px 0 0;
`
const PropertySide = styled.div`
    flex: 1;
    min-width: 0;
    display: grid;
    gap: 1px;
    margin: -4px 3px 0 3px;
`
const Combo = styled.div`
    display: flex;
    align-items: center;
    height: 34px;
    padding: 0 2px 0 4px;
    background: linear-gradient(#6c6c6c, #4b4b4b);
    border: 2px solid #333;
`
const ComboIcons = styled.div`
    display: flex;
    align-items: center;
    gap: 4px;
    padding-left: ${p => p.$pad || 0}px;
`
const Swatch = styled.i`
    width: 23px;
    height: 23px;
    background: ${p => p.$color};
    border: 2px solid ${p => p.$edge};
`
const Select = styled.select`
    flex: 1;
    min-width: 0;
    margin-left: ${p => p.$left}px;
    appearance: none;
    outline: none;
`
const LineSample = styled.i`
    width: 95px;
    height: 2px;
    background: #fff;
`
const IconGrid = styled.div`
    display: grid;
    grid-template-columns: repeat(5, 24px);
    gap: 12px;
    padding: 7px 0 0 6px;
`
const Flyout = styled.div`
    position: absolute;
    top: 145px;
    left: 0;
    width: 315px;
    padding-top: 10px;
    background: #5c5c5c;
    border-top: 1px solid #444;
    border-right: 1px solid #222;
    border-bottom: 2px solid #222;
`
const FlyoutRow = styled.div`
    display: flex;
    gap: 18px;
    height: 36px;
    padding-left: 8px;
`
const FlyoutGroup = styled.div`
    display: flex;
    align-items: flex-start;
    gap: 12px;
`
const FlyoutTitle = styled.div`
    display: flex;
    align-items: center;
    height: 27px;
    margin-top: -5px;
    background: linear-gradient(#505050, #474747);
`
const PinButton = styled.button`
    display: flex;
    align-items: center;
    justify-content: center;
    width: 24px;
    height: 27px;
    border: 2px solid #2e2e2e;
`
const FlyoutName = styled.span`
    flex: 1;
    padding-right: 44px;
    text-align: center;
    line-height: 26px;
`
const FileStrip = styled.div`
    height: 45px;
    background: #383838;
    border-top: 2px solid #7a7a7a;
    border-bottom: 6px solid #5f5f5f;
`
const Workspace = styled.main`
    display: flex;
    flex: 1;
    min-height: 0;
`
const Canvas = styled.div`
    position: relative;
    flex: 1;
    min-width: 0;
    background: #212733;
    overflow: hidden;
`
const EdgeStrip = styled.div`
    width: 6px;
    background: linear-gradient(#b9d0f0, #d5e2f6 10%, #bcd2ef 13%);
`
const DrawingSvg = styled.svg`
    width: 100%;
    height: 100%;
`
const ViewCube = styled.div`
    position: absolute;
    top: 21px;
    right: 22px;
    width: 122px;
    height: 122px;
`
const CubeFace = styled.button`
    position: absolute;
    top: 35px;
    left: 35px;
    width: 52px;
    height: 52px;
    background: #a7adb7;
    border: 2px solid #8b8d91;
    box-shadow: inset 0 0 0 8px #b1b2b4;
    color: #565a62;
    font-size: 28px;
    font-weight: 300;
    line-height: 46px;
`
const Compass = styled.span`
    position: absolute;
    left: ${p => p.$x}px;
    top: ${p => p.$y}px;
    transform: translate(-50%, -50%);
    line-height: 20px;
    color: #b9bcc2;
`
const Wcs = styled.button`
    position: absolute;
    top: 169px;
    right: 48px;
    display: flex;
    align-items: center;
    gap: 8px;
    width: 70px;
    height: 25px;
    padding-left: 5px;
    border-radius: 5px;
    border: 2px solid #80848f;
    background: #9a9eaa;
    color: #4b505c;
    font-family: "Liberation Sans", sans-serif;
    font-size: 15px;
`
const Nav = styled.div`
    position: absolute;
    top: 229px;
    right: 3px;
    border-radius: 4px;
    background: rgba(125, 130, 135, 0.6);
`
const DynamicInput = styled.input`
    position: absolute;
    left: 1076px;
    top: 307px;
    width: 75px;
    height: 30px;
    padding: 0 0 2px 4px;
    background: #fff;
    color: #000;
    border: 1px solid #777;
    outline: none;
`
const TextCursor = styled.i`
    position: absolute;
    left: 1111px;
    top: 309px;
    width: 1px;
    height: 24px;
    background: #000;
`
const Suggest = styled.div`
    position: absolute;
    left: 1076px;
    top: 338px;
    display: flex;
    width: 450px;
    height: 193px;
    background: #fff;
    border: 1px solid #8a8a8a;
`
const SuggestList = styled.ul`
    flex: 1;
    margin: 0;
    padding: 0;
    list-style: none;
`
const SuggestItem = styled.li`
    display: flex;
    align-items: center;
    gap: 4px;
    height: 27px;
    padding-left: 3px;
    color: #000;
`
const SuggestText = styled.span`
    flex: 1;
    padding-left: 2px;
    line-height: 27px;
    ${p => p.$selected && css`
        background: #0073e0;
        color: #e9f4ff;
    `}
`
const ScrollBar = styled.div`
    display: flex;
    flex-direction: column;
    align-items: center;
    justify-content: flex-start;
    width: 26px;
    background: #efefef;
    & > svg:last-child {
        margin-top: auto;
    }
`
const Thumb = styled.i`
    width: 24px;
    height: 26px;
    background: #c9c9c9;
`
const History = styled.div`
    position: absolute;
    left: 386px;
    bottom: 43px;
    display: flex;
    flex-direction: column;
    align-items: flex-start;
    gap: 7px;
    font-family: "Liberation Mono", "Noto Sans CJK SC", monospace;
    font-size: 19px;
`
const HistoryLine = styled.span`
    height: 24px;
    padding: 0 4px;
    line-height: 24px;
    border-radius: 3px;
    background: ${p => ['#5f6062', '#57595e', '#4b4f57'][p.$dim || 0]};
    color: ${p => ['#fff', '#dadada', '#a9abae'][p.$dim || 0]};
`
const CommandBar = styled.div`
    position: absolute;
    left: 294px;
    right: 282px;
    bottom: 1px;
    display: flex;
    height: 39px;
    border: 2px solid #62656c;
    border-radius: 4px;
    overflow: hidden;
`
const CommandHandle = styled.div`
    width: 80px;
    background: linear-gradient(#5d5f63, #45474b);
`
const CommandField = styled.div`
    display: flex;
    flex: 1;
    align-items: center;
    padding: 0 6px;
    background: rgba(255, 255, 255, 0.72);
`
const CommandInput = styled.input`
    flex: 1;
    margin-left: 14px;
    font-size: 20px;
    font-style: italic;
    color: #333;
    outline: none;
    &::placeholder {
        color: #7b7d82;
        opacity: 1;
    }
`
const LayoutBar = styled.div`
    position: relative;
    display: flex;
    height: 42px;
    padding-left: 7px;
    background: #383838;
    border-top: 2px solid #585a5e;
`
const LayoutTab = styled.button`
    width: 80px;
    height: 25px;
    line-height: 25px;
    color: ${p => p.$active ? '#fff' : '#b0b0b0'};
    font-weight: ${p => p.$active ? 700 : 400};
    background: ${p => p.$active ? 'linear-gradient(#555, #868686)' : 'linear-gradient(#4a4a4a, #5c5c5c)'};
    clip-path: polygon(0 0, 100% 0, 95% 12%, 88% 80%, 84% 100%, 16% 100%, 12% 80%, 5% 12%);
`
const AddTab = styled.button`
    display: flex;
    align-items: center;
    justify-content: center;
    width: 34px;
    height: 25px;
    margin-left: 6px;
    background: #565656;
    border-radius: 14px 0 16px 2px;
`
const DimInfo = styled.div`
    margin-left: auto;
    height: 39px;
    padding: 0 0 0 6px;
    border: 2px solid #777;
    border-right: none;
    background: #4b4b4b;
    line-height: 38px;
    font-weight: 500;
    white-space: nowrap;
`
const ImeBar = styled.div`
    position: absolute;
    right: 129px;
    top: -21px;
    display: flex;
    align-items: center;
    height: 37px;
    background: linear-gradient(90deg, transparent 30px, #fff 30px);
`
const ImeLang = styled.span`
    margin: 0 12px 0 5px;
    font-size: 22px;
    font-weight: 700;
    line-height: 36px;
    color: #1f6fc9;
`
const Status = styled.footer`
    display: flex;
    gap: 2px;
    height: 36px;
    padding-left: 95px;
    background: linear-gradient(90deg, #383838 95px, #5a5a5a 95px);
    overflow: hidden;
`
const groupBox = css`
    display: flex;
    flex: none;
    margin-top: 2px;
    border: 2px solid #7a7a7a;
    border-bottom: none;
    background: #4c4c4c;
`
const StatusGroup = styled.div`
    ${groupBox}
    gap: 2px;
    padding: 1px 1px 0;
`
const Coords = styled.div`
    ${groupBox}
    width: 275px;
    justify-content: flex-end;
    padding-right: 7px;
    line-height: 36px;
    font-size: 17px;
    font-weight: 600;
    white-space: nowrap;
`
const ModelButton = styled.button`
    width: 39px;
    height: 34px;
    font-weight: 700;
`
const StatusButton = styled.button`
    display: flex;
    align-items: center;
    justify-content: center;
    width: ${p => p.$width}px;
    height: 34px;
    background: ${p => p.$on ? '#5b8fc7' : 'none'};
    border: 1px solid ${p => p.$on ? '#476f9c' : 'transparent'};
`
const Divider = styled.i`
    width: 2px;
    height: 34px;
    margin: 0 -1px;
    background: #777;
`
const StatusField = styled.div`
    display: flex;
    align-items: center;
    width: ${p => p.$width}px;
    height: 34px;
    padding: 0 5px;
`
const StatusSelect = styled.select`
    flex: 1;
    min-width: 0;
    margin-left: ${p => p.$left || 0}px;
    font-size: ${p => p.$small ? 16 : 17}px;
    font-weight: 500;
    white-space: nowrap;
    appearance: none;
    outline: none;
`
